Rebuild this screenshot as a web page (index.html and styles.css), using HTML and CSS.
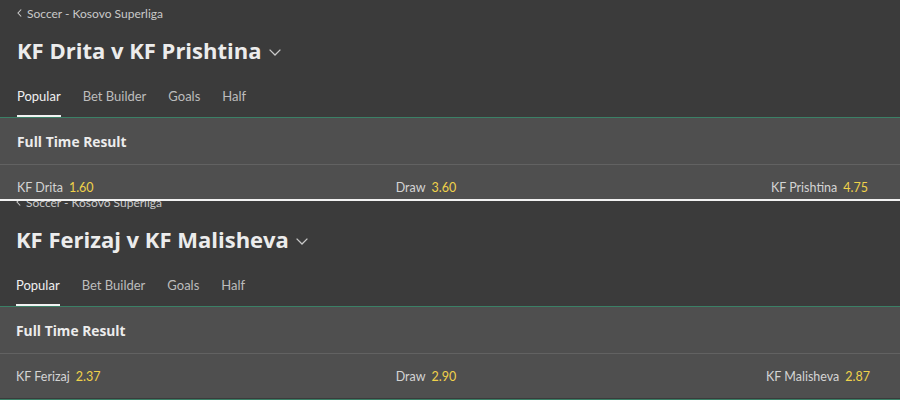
FILE: index.html
```html
<!DOCTYPE html>
<html>
<head>
<meta charset="utf-8">
<link rel="stylesheet" href="styles.css">
</head>
<body>
<div class="shot">
  <div class="page">
    <div class="crumb"><svg class="back" width="5" height="8" viewBox="0 0 5 8"><path d="M4.2 0.5 L1 4 L4.2 7.5" fill="none" stroke="#c9c9c9" stroke-width="1.1"/></svg>Soccer - Kosovo Superliga</div>
    <div class="title"><h1>KF Drita v KF Prishtina</h1><svg class="drop" width="12" height="7" viewBox="0 0 12 7"><path d="M0.6 0.6 L6 6 L11.4 0.6" fill="none" stroke="#c9c9c9" stroke-width="1.3"/></svg></div>
    <nav class="tabs">
      <span class="tab active">Popular</span>
      <span class="tab">Bet Builder</span>
      <span class="tab">Goals</span>
      <span class="tab">Half</span>
    </nav>
    <section class="market">
      <div class="market-head">Full Time Result</div>
      <div class="odds">
        <div class="sel left">KF Drita<b>1.60</b></div>
        <div class="sel mid">Draw<b>3.60</b></div>
        <div class="sel right">KF Prishtina<b>4.75</b></div>
      </div>
    </section>
  </div>
</div>
<div class="shot second">
  <div class="page">
    <div class="crumb"><svg class="back" width="5" height="8" viewBox="0 0 5 8"><path d="M4.2 0.5 L1 4 L4.2 7.5" fill="none" stroke="#c9c9c9" stroke-width="1.1"/></svg>Soccer - Kosovo Superliga</div>
    <div class="title"><h1>KF Ferizaj v KF Malisheva</h1><svg class="drop" width="12" height="7" viewBox="0 0 12 7"><path d="M0.6 0.6 L6 6 L11.4 0.6" fill="none" stroke="#c9c9c9" stroke-width="1.3"/></svg></div>
    <nav class="tabs">
      <span class="tab active">Popular</span>
      <span class="tab">Bet Builder</span>
      <span class="tab">Goals</span>
      <span class="tab">Half</span>
    </nav>
    <section class="market">
      <div class="market-head">Full Time Result</div>
      <div class="odds">
        <div class="sel left">KF Ferizaj<b>2.37</b></div>
        <div class="sel mid">Draw<b>2.90</b></div>
        <div class="sel right">KF Malisheva<b>2.87</b></div>
      </div>
    </section>
  </div>
</div>
</body>
</html>
```
FILE: styles.css
```css
* { box-sizing: border-box; }
html, body { margin: 0; padding: 0; }
body {
  width: 900px;
  height: 400px;
  overflow: hidden;
  background: #3b3b3b;
  font-family: "Lato", "Open Sans", sans-serif;
  color: #e6e6e6;
}
.shot {
  height: 199px;
  overflow: hidden;
  background: #3b3b3b;
}
.second {
  height: 201px;
  border-top: 2px solid #f2f2f2;
  border-bottom: 1px solid #3b8066;
}
.second .page { margin-top: -12px; padding-left: 16px; }
.second .odds { padding-left: 16px; padding-right: 30px; }
.second .market-head { padding-left: 16px; }
.page { padding-left: 17px; }
.crumb {
  height: 26px;
  display: flex;
  align-items: center;
  gap: 5px;
  font-size: 12px;
  color: #c9c9c9;
}
.back { flex: none; }
.title {
  height: 48px;
  display: flex;
  align-items: center;
  gap: 7px;
}
.title h1 {
  margin: 0;
  font-family: "Open Sans", "Lato", sans-serif;
  font-size: 22px;
  font-weight: 700;
  color: #ececec;
}
.drop { margin-top: 4px; }
.tabs {
  height: 44px;
  display: flex;
  gap: 22px;
  margin-left: -17px;
  padding-left: 17px;
  border-bottom: 1px solid #3b8066;
}
.second .tabs { margin-left: -16px; padding-left: 16px; }
.tab {
  display: flex;
  align-items: center;
  padding-top: 2px;
  font-size: 13px;
  color: #bdbdbd;
  border-bottom: 2px solid transparent;
}
.tab.active {
  color: #f0f0f0;
  border-bottom-color: #f2f2f2;
}
.market {
  margin-left: -17px;
  background: #4f4f4f;
}
.second .market { margin-left: -16px; }
.market-head {
  height: 47px;
  display: flex;
  align-items: center;
  padding-left: 17px;
  font-family: "Open Sans", "Lato", sans-serif;
  font-size: 13.8px;
  font-weight: 700;
  color: #ececec;
  border-bottom: 1px solid #626262;
}
.odds {
  height: 44px;
  display: grid;
  grid-template-columns: 1fr 1fr 1fr;
  align-items: center;
  padding: 0 32px 0 17px;
  font-size: 12.5px;
  color: #d4d4d4;
}
.sel b {
  font-weight: 400;
  color: #f0d24a;
  margin-left: 6px;
}
.mid { padding-left: 95px; }
.right { text-align: right; }
```
